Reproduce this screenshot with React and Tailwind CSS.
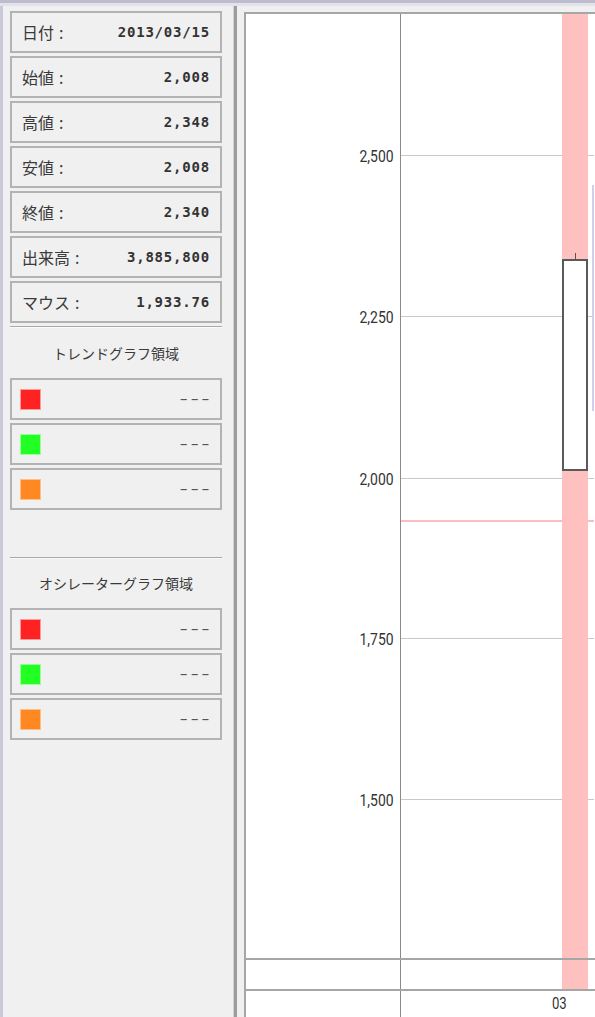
import React from "react";

const quote = [
  { label: "日付", value: "2013/03/15" },
  { label: "始値", value: "2,008" },
  { label: "高値", value: "2,348" },
  { label: "安値", value: "2,008" },
  { label: "終値", value: "2,340" },
  { label: "出来高", value: "3,885,800" },
  { label: "マウス", value: "1,933.76" },
];

const legendColors = [
  { fill: "bg-[#ff2222]", edge: "border-[#ff9a9a]" },
  { fill: "bg-[#22ff22]", edge: "border-[#9aff9a]" },
  { fill: "bg-[#ff8822]", edge: "border-[#ffbf8a]" },
];

// price axis: value -> y inside the plot area
const ticks = [
  { label: "2,500", y: 141 },
  { label: "2,250", y: 302 },
  { label: "2,000", y: 464 },
  { label: "1,750", y: 624 },
  { label: "1,500", y: 785 },
];

const jp = { fontFamily: '"Noto Sans CJK JP", "Noto Sans", sans-serif' };
const mono = { fontFamily: '"DejaVu Sans Mono", "Liberation Mono", monospace' };
const axisFont = { fontFamily: 'Roboto, "Liberation Sans", sans-serif' };

function Box({ children }) {
  return (
    <div className="h-[42px] w-[212px] border-2 border-[#b3b3b3] bg-[#f0f0f0] flex items-center">
      {children}
    </div>
  );
}

function QuoteRow({ label, value }) {
  return (
    <Box>
      <span className="pl-[10px] text-[16px] text-[#3a3a3a]" style={jp}>
        {label}
        <span className="ml-[5px]">:</span>
      </span>
      <span
        className="ml-auto pr-[10px] text-[14px] font-bold tracking-[0.8px] text-[#333]"
        style={mono}
      >
        {value}
      </span>
    </Box>
  );
}

function LegendRow({ fill, edge }) {
  return (
    <Box>
      <span className={`ml-[8px] h-[21px] w-[21px] border ${fill} ${edge}`} />
      <span
        className="ml-auto mr-[11px] text-[14px] leading-none tracking-[-2px] text-[#555] scale-x-[1.7] origin-right"
        style={mono}
      >
        ---
      </span>
    </Box>
  );
}

function SectionTitle({ children }) {
  return (
    <div
      className="w-[212px] h-[50px] flex items-center justify-center text-[14px] text-[#3a3a3a]"
      style={jp}
    >
      {children}
    </div>
  );
}

function Plot() {
  return (
    <svg className="absolute inset-0" width="193" height="944" viewBox="0 0 193 944">
      {ticks.map((t) => (
        <line key={t.label} x1="0" x2="193" y1={t.y + 0.5} y2={t.y + 0.5} stroke="#c8c8c8" />
      ))}
      <rect x="0" y="506" width="193" height="2" fill="#ffbcbc" />
      <rect x="161" y="0" width="26" height="944" fill="#ffc0c0" />
      <rect x="191" y="171" width="2" height="226" fill="#cfcff2" />
      <line x1="174.5" x2="174.5" y1="239" y2="246" stroke="#555" />
      <rect x="162" y="246" width="24" height="210" fill="#fff" stroke="#5a5a5a" strokeWidth="2" />
    </svg>
  );
}

export default function App() {
  return (
    <div className="w-[595px] h-[1017px] bg-[#f0f0f0] overflow-hidden flex flex-col">
      {/* window frame strip */}
      <div className="h-[3px] bg-[#bdbdcf]" />
      <div className="h-[3px] bg-[#e2e2ea]" />

      <div className="flex flex-1 min-h-0">
        <div className="w-[3px] bg-[#c9c9d9]" />

        {/* info panel */}
        <div className="w-[230px] pl-[7px] pt-[5px] flex flex-col">
          <div className="flex flex-col gap-[3px]">
            {quote.map((q) => (
              <QuoteRow key={q.label} {...q} />
            ))}
          </div>

          <div className="mt-[3px] w-[212px] border-t border-b border-t-[#a8a8a8] border-b-[#fafafa]" />
          <SectionTitle>トレンドグラフ領域</SectionTitle>
          <div className="flex flex-col gap-[3px]">
            {legendColors.map((c, i) => (
              <LegendRow key={i} {...c} />
            ))}
          </div>

          <div className="mt-[47px] w-[212px] border-t border-b border-t-[#a8a8a8] border-b-[#fafafa]" />
          <div className="-mt-[1px]">
            <SectionTitle>オシレーターグラフ領域</SectionTitle>
          </div>
          <div className="flex flex-col gap-[3px]">
            {legendColors.map((c, i) => (
              <LegendRow key={i} {...c} />
            ))}
          </div>
        </div>

        {/* splitter */}
        <div className="w-[1px] bg-[#d2d2d2]" />
        <div className="w-[3px] bg-[#9c9c9c]" />
        <div className="w-[7px]" />

        {/* chart */}
        <div className="flex-1 mt-[6px] bg-white border-l-2 border-t-2 border-[#a6a6a6] flex flex-col">
          <div className="flex flex-1">
            <div className="relative w-[155px] border-r border-[#8a8a8a]">
              {ticks.map((t) => (
                <div
                  key={t.label}
                  className="absolute right-[6px] -translate-y-1/2 text-[17px] leading-none text-[#333] scale-x-[0.82] origin-right"
                  style={{ ...axisFont, top: t.y + 1 }}
                >
                  {t.label}
                </div>
              ))}
            </div>
            <div className="relative flex-1">
              <Plot />
            </div>
          </div>

          <div className="flex h-[31px] border-t-2 border-[#a6a6a6]">
            <div className="w-[155px] border-r border-[#8a8a8a]" />
            <div className="flex-1 pl-[161px]">
              <div className="h-full w-[26px] bg-[#ffc0c0]" />
            </div>
          </div>

          <div className="flex h-[28px] border-t-2 border-[#a6a6a6]">
            <div className="w-[155px] border-r border-[#8a8a8a]" />
            <div className="flex-1 relative">
              <span
                className="absolute left-[151px] top-[5px] text-[16px] leading-none text-[#333] scale-x-[0.82] origin-left"
                style={axisFont}
              >
                03
              </span>
            </div>
          </div>
        </div>
      </div>
    </div>
  );
}
